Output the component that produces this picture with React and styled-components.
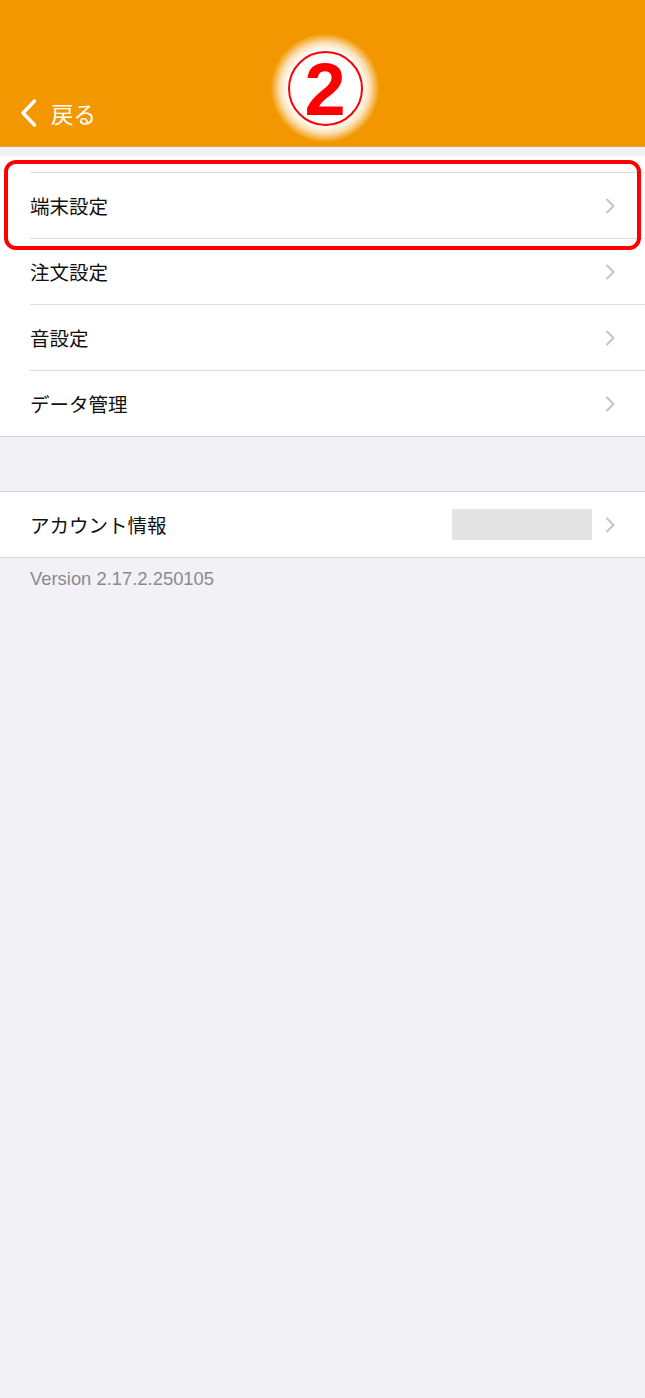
import React from 'react';
import styled, { createGlobalStyle } from 'styled-components'

const GlobalStyle = createGlobalStyle`
  html, body {
    margin: 0;
    padding: 0;
    background: #f2f1f6;
  }
`

const Page = styled.div`
  width: 645px;
  min-height: 1398px;
  background: #f2f1f6;
  font-family: "Noto Sans CJK JP", "Liberation Sans", sans-serif;
`

const Header = styled.header`
  position: relative;
  height: 146px;
  background: #f39700;
  border-bottom: 1px solid #d9a35a;
  display: flex;
  align-items: flex-end;
`

const NavBar = styled.div`
  height: 66px;
  display: flex;
  align-items: center;
  padding-left: 19px;
  gap: 12px;
  color: #fff;
`

const BackLabel = styled.span`
  font-size: 22.5px;
  line-height: 1;
  color: #fff;
`

const StepMark = styled.div`
  position: absolute;
  left: 270px;
  top: 33px;
  width: 110px;
  height: 110px;
  border-radius: 50%;
  background: radial-gradient(circle, #fff 0%, #fff 48%, rgba(255,255,255,0.7) 58%, rgba(255,255,255,0) 70%);
  display: flex;
  align-items: center;
  justify-content: center;
`

const StepCircle = styled.div`
  width: 75px;
  height: 75px;
  border: 2px solid #ff0000;
  border-radius: 50%;
  display: flex;
  align-items: center;
  justify-content: center;
  color: #ff0000;
  font-family: "Liberation Sans", Arial, sans-serif;
  font-weight: 700;
  font-size: 74px;
  line-height: 1;
  padding-top: 3px;
  box-sizing: border-box;
`

const Section = styled.section`
  position: relative;
  background: #fff;
  margin-top: ${p => p.$gap}px;
  padding-top: ${p => p.$padTop || 0}px;
  border-top: ${p => p.$bordered ? '1px solid #d8d8dc' : 'none'};
  border-bottom: 1px solid #d8d8dc;
`

const Row = styled.div`
  height: 65px;
  margin-left: 30px;
  padding-right: 30px;
  display: flex;
  align-items: center;
  border-top: ${p => p.$divider ? '1px solid #dcdce0' : 'none'};
`

const Label = styled.span`
  flex: 1;
  font-size: 19.5px;
  color: #111;
`

const Placeholder = styled.div`
  width: 140px;
  height: 31px;
  background: #e4e4e4;
  margin-right: 13px;
`

const Highlight = styled.div`
  position: absolute;
  left: 4px;
  top: 4px;
  width: 637px;
  height: 90px;
  box-sizing: border-box;
  border: 4px solid #ff0000;
  border-radius: 12px;
  box-shadow: 0 0 0 3px #fff;
  pointer-events: none;
`

const Version = styled.div`
  padding: 10px 30px;
  font-family: "Liberation Sans", Arial, sans-serif;
  font-size: 18.4px;
  color: #8a8a8e;
`

const Chevron = () => (
  <svg width="10" height="16" viewBox="0 0 10 16">
    <path d="M2 1.5 L8.5 8 L2 14.5" fill="none" stroke="#c4c4c8" strokeWidth="2" strokeLinecap="round" strokeLinejoin="round" />
  </svg>
)

const BackIcon = () => (
  <svg width="20" height="30" viewBox="0 0 20 30">
    <path d="M15.5 3 L4 15 L15.5 27" fill="none" stroke="#fff" strokeWidth="3.5" strokeLinecap="round" strokeLinejoin="round" />
  </svg>
)

const settings = ['端末設定', '注文設定', '音設定', 'データ管理']

const App = () => {
  return (
    <Page>
      <GlobalStyle />
      <Header>
        <NavBar>
          <BackIcon />
          <BackLabel>戻る</BackLabel>
        </NavBar>
        <StepMark>
          <StepCircle>2</StepCircle>
        </StepMark>
      </Header>

      <Section $gap={9} $padTop={16}>
        {settings.map(name => (
          <Row key={name} $divider>
            <Label>{name}</Label>
            <Chevron />
          </Row>
        ))}
        <Highlight />
      </Section>

      <Section $gap={54} $bordered>
        <Row>
          <Label>アカウント情報</Label>
          <Placeholder />
          <Chevron />
        </Row>
      </Section>

      <Version>Version 2.17.2.250105</Version>
    </Page>
  );
}

export default App;
